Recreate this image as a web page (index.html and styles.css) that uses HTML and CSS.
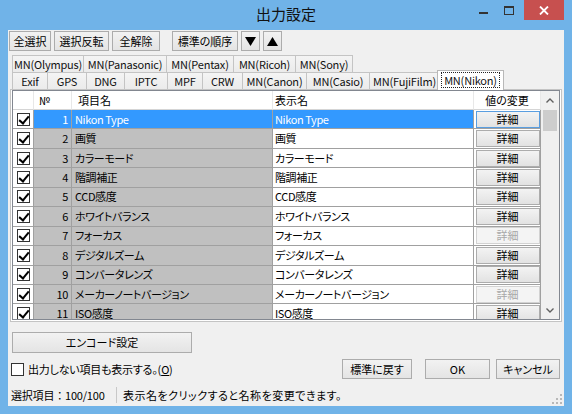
FILE: index.html
```html
<!DOCTYPE html>
<html lang="ja">
<head>
<meta charset="utf-8">
<title>出力設定</title>
<link rel="stylesheet" href="styles.css">
</head>
<body>
<div class="window">
  <div class="titlebar">
    <div class="tb-left"></div>
    <div class="title">出力設定</div>
    <div class="caption">
      <div class="cbtn cmin"><svg width="9" height="3" viewBox="0 0 9 3"><rect x="0" y="0" width="9" height="2" fill="#333"/></svg></div>
      <div class="cbtn cmax"><svg width="10" height="9" viewBox="0 0 10 9"><rect x="0.5" y="0.5" width="9" height="8" fill="none" stroke="#333"/><rect x="0" y="0" width="10" height="2" fill="#333"/></svg></div>
      <div class="cbtn cclose"><svg width="10" height="9" viewBox="0 0 10 9"><path d="M1 0.5 L9 8.5 M9 0.5 L1 8.5" stroke="#fff" stroke-width="1.8"/></svg></div>
    </div>
  </div>
  <div class="client">
    <div class="toolbar">
      <button class="btn b-all">全選択</button>
      <button class="btn b-inv">選択反転</button>
      <button class="btn b-clr">全解除</button>
      <button class="btn b-std">標準の順序</button>
      <button class="btn b-arr"><svg width="11" height="9" viewBox="0 0 11 9"><polygon points="0,0 11,0 5.5,9" fill="#000"/></svg></button>
      <button class="btn b-arr"><svg width="11" height="9" viewBox="0 0 11 9"><polygon points="0,9 11,9 5.5,0" fill="#000"/></svg></button>
    </div>
    <div class="tabs">
      <div class="tabrow r1">
        <div class="tab">MN(Olympus)</div>
        <div class="tab">MN(Panasonic)</div>
        <div class="tab">MN(Pentax)</div>
        <div class="tab">MN(Ricoh)</div>
        <div class="tab">MN(Sony)</div>
      </div>
      <div class="tabrow r2">
        <div class="tab">Exif</div>
        <div class="tab">GPS</div>
        <div class="tab">DNG</div>
        <div class="tab">IPTC</div>
        <div class="tab">MPF</div>
        <div class="tab">CRW</div>
        <div class="tab">MN(Canon)</div>
        <div class="tab">MN(Casio)</div>
        <div class="tab">MN(FujiFilm)</div>
        <div class="tab active"><span class="focus">MN(Nikon)</span></div>
      </div>
    </div>
    <div class="panel">
      <div class="list">
        <div class="grid">
          <div class="row head">
            <div class="c-chk"></div>
            <div class="c-no">№</div>
            <div class="c-name">項目名</div>
            <div class="c-disp">表示名</div>
            <div class="c-btn">値の変更</div>
          </div>
          <div class="row sel">
            <div class="c-chk"><span class="cb"></span></div>
            <div class="c-no">1</div>
            <div class="c-name">Nikon Type</div>
            <div class="c-disp">Nikon Type</div>
            <div class="c-btn"><span class="dbtn">詳細</span></div>
          </div>
          <div class="row">
            <div class="c-chk"><span class="cb"></span></div>
            <div class="c-no">2</div>
            <div class="c-name">画質</div>
            <div class="c-disp">画質</div>
            <div class="c-btn"><span class="dbtn">詳細</span></div>
          </div>
          <div class="row">
            <div class="c-chk"><span class="cb"></span></div>
            <div class="c-no">3</div>
            <div class="c-name">カラーモード</div>
            <div class="c-disp">カラーモード</div>
            <div class="c-btn"><span class="dbtn">詳細</span></div>
          </div>
          <div class="row">
            <div class="c-chk"><span class="cb"></span></div>
            <div class="c-no">4</div>
            <div class="c-name">階調補正</div>
            <div class="c-disp">階調補正</div>
            <div class="c-btn"><span class="dbtn">詳細</span></div>
          </div>
          <div class="row">
            <div class="c-chk"><span class="cb"></span></div>
            <div class="c-no">5</div>
            <div class="c-name">CCD感度</div>
            <div class="c-disp">CCD感度</div>
            <div class="c-btn"><span class="dbtn">詳細</span></div>
          </div>
          <div class="row">
            <div class="c-chk"><span class="cb"></span></div>
            <div class="c-no">6</div>
            <div class="c-name">ホワイトバランス</div>
            <div class="c-disp">ホワイトバランス</div>
            <div class="c-btn"><span class="dbtn">詳細</span></div>
          </div>
          <div class="row">
            <div class="c-chk"><span class="cb"></span></div>
            <div class="c-no">7</div>
            <div class="c-name">フォーカス</div>
            <div class="c-disp">フォーカス</div>
            <div class="c-btn"><span class="dbtn off">詳細</span></div>
          </div>
          <div class="row">
            <div class="c-chk"><span class="cb"></span></div>
            <div class="c-no">8</div>
            <div class="c-name">デジタルズーム</div>
            <div class="c-disp">デジタルズーム</div>
            <div class="c-btn"><span class="dbtn">詳細</span></div>
          </div>
          <div class="row">
            <div class="c-chk"><span class="cb"></span></div>
            <div class="c-no">9</div>
            <div class="c-name">コンバータレンズ</div>
            <div class="c-disp">コンバータレンズ</div>
            <div class="c-btn"><span class="dbtn">詳細</span></div>
          </div>
          <div class="row">
            <div class="c-chk"><span class="cb"></span></div>
            <div class="c-no">10</div>
            <div class="c-name">メーカーノートバージョン</div>
            <div class="c-disp">メーカーノートバージョン</div>
            <div class="c-btn"><span class="dbtn off">詳細</span></div>
          </div>
          <div class="row">
            <div class="c-chk"><span class="cb"></span></div>
            <div class="c-no">11</div>
            <div class="c-name">ISO感度</div>
            <div class="c-disp">ISO感度</div>
            <div class="c-btn"><span class="dbtn">詳細</span></div>
          </div>
        </div>
        <div class="vscroll">
          <div class="sb-arrow"><svg width="8" height="5" viewBox="0 0 8 5"><polyline points="0.5,4.5 4,1 7.5,4.5" fill="none" stroke="#606060" stroke-width="1.4"/></svg></div>
          <div class="sb-thumb"></div>
          <div class="sb-track"></div>
          <div class="sb-arrow"><svg width="8" height="5" viewBox="0 0 8 5"><polyline points="0.5,0.5 4,4 7.5,0.5" fill="none" stroke="#606060" stroke-width="1.4"/></svg></div>
        </div>
      </div>
    </div>
    <div class="lower">
      <button class="btn b-enc">エンコード設定</button>
      <div class="bottomrow">
        <label class="showall"><span class="cb empty"></span><span class="lbl">出力しない項目も表示する。(<u>O</u>)</span></label>
        <div class="actions">
          <button class="btn b-reset">標準に戻す</button>
          <button class="btn b-ok">OK</button>
          <button class="btn b-cancel">キャンセル</button>
        </div>
      </div>
    </div>
    <div class="statusbar">
      <div class="sp1">選択項目：100/100</div>
      <div class="sep"></div>
      <div class="sp2">表示名をクリックすると名称を変更できます。</div>
      <svg class="grip" width="10" height="10" viewBox="0 0 10 10">
        <rect x="8" y="0" width="2" height="2" fill="#b8b8b8"/>
        <rect x="4" y="4" width="2" height="2" fill="#b8b8b8"/>
        <rect x="8" y="4" width="2" height="2" fill="#b8b8b8"/>
        <rect x="0" y="8" width="2" height="2" fill="#b8b8b8"/>
        <rect x="4" y="8" width="2" height="2" fill="#b8b8b8"/>
        <rect x="8" y="8" width="2" height="2" fill="#b8b8b8"/>
      </svg>
    </div>
  </div>
</div>
</body>
</html>
```
FILE: styles.css
```css
* { box-sizing: border-box; margin: 0; padding: 0; }
html, body { width: 572px; height: 414px; overflow: hidden; }
body {
  background: #70b3e8;
  font-family: "Noto Sans CJK JP", "Noto Sans", sans-serif;
  font-size: 11px;
  font-feature-settings: "palt";
  color: #000;
}
.window { width: 572px; height: 414px; display: flex; flex-direction: column; }

/* title bar */
.titlebar {
  height: 30px;
  display: grid;
  grid-template-columns: 1fr auto 1fr;
  padding-right: 8px;
}
.title { font-size: 15px; line-height: 28px; color: #111; padding-left: 8px; font-feature-settings: normal; }
.caption { display: flex; justify-content: flex-end; align-items: flex-start; }
.cbtn { height: 20px; display: flex; align-items: center; justify-content: center; }
.cmin { width: 22px; padding-top: 6px; }
.cmax { width: 30px; }
.cclose { width: 40px; background: #c7504f; }

/* client */
.client {
  flex: 1;
  margin: 0 8px 8px 8px;
  background: #f0f0f0;
  display: flex;
  flex-direction: column;
}
.btn {
  height: 20px;
  border: 1px solid #acacac;
  background: linear-gradient(#f2f2f2, #e4e4e4);
  font-family: inherit;
  font-size: 11px;
  font-feature-settings: "palt";
  line-height: 17px;
  color: #000;
  padding: 0;
  display: flex;
  align-items: center;
  justify-content: center;
}
.toolbar { display: flex; gap: 3px; padding: 1px 0 0 1px; height: 21px; }
.b-all { width: 42px; }
.b-inv { width: 55px; }
.b-clr { width: 48px; margin-right: 9px; }
.b-std { width: 66px; }
.b-arr { width: 19px; }

/* tabs */
.tabs { margin-top: 4px; height: 34px; padding-left: 4px; display: flex; flex-direction: column; }
.tabrow { display: flex; height: 17px; align-items: flex-end; }
.tab {
  height: 17px;
  border: 1px solid #c4c4c4;
  border-bottom: none;
  margin-left: -1px;
  background: linear-gradient(#f4f4f4, #ebebeb);
  display: flex;
  align-items: center;
  justify-content: center;
  font-size: 11px;
  line-height: 15px;
  white-space: nowrap;
  letter-spacing: -0.2px;
  color: #111;
}
.tabrow .tab:first-child { margin-left: 0; }
.r1 .tab:nth-child(1) { width: 72px; }
.r1 .tab:nth-child(2) { width: 84px; }
.r1 .tab:nth-child(3) { width: 68px; }
.r1 .tab:nth-child(4) { width: 63px; }
.r1 .tab:nth-child(5) { width: 58px; }
.r2 .tab:nth-child(1) { width: 36px; }
.r2 .tab:nth-child(2) { width: 40px; }
.r2 .tab:nth-child(3) { width: 39px; }
.r2 .tab:nth-child(4) { width: 44px; }
.r2 .tab:nth-child(5) { width: 36px; }
.r2 .tab:nth-child(6) { width: 41px; }
.r2 .tab:nth-child(7) { width: 65px; }
.r2 .tab:nth-child(8) { width: 64px; }
.r2 .tab:nth-child(9) { width: 71px; }
.tab.active {
  width: 67px;
  height: 20px;
  margin: 0 -2px -1px -3px;
  background: #fff;
  position: relative;
  z-index: 1;
  border-color: #b8b8b8;
  padding-bottom: 2px;
}
.focus { outline: 1px dotted #222; outline-offset: 0; padding: 0 2px; line-height: 14px; }

/* panel + list */
.panel {
  height: 233px;
  margin: 0 2px;
  border: 1px solid #c4c4c4;
  background: #fff;
  padding: 0 1px 1px 1px;
}
.list {
  height: 230px;
  border: 1px solid #828790;
  background: #fff;
  display: flex;
}
.grid { width: 528px; overflow: hidden; }
.row {
  display: grid;
  grid-template-columns: 21px 38px 201px 201px 67px;
  height: 19.45px;
}
.row > div {
  border-right: 1px solid #a0a0a0;
  border-bottom: 1px solid #a0a0a0;
  display: flex;
  align-items: center;
  overflow: hidden;
  white-space: nowrap;
  line-height: 15px;
  letter-spacing: -0.4px;
}
.row.head { height: 19px; }
.row.head > div { border-right: 1px solid #e8e8e8; border-bottom: 1px solid #d5d5d5; background: #fff; letter-spacing: 0; }
.head .c-no { justify-content: flex-start; padding-left: 5px; }
.head .c-name { padding-left: 6px; }
.head .c-btn { justify-content: center; }
.c-chk { justify-content: center; background: #fff; }
.c-no { justify-content: flex-end; padding-right: 3px; background: #c0c0c0; }
.c-name { padding-left: 3px; background: #c0c0c0; }
.c-disp { padding-left: 2px; background: #fff; }
.c-btn { justify-content: center; background: #fff; }
.row.sel .c-no, .row.sel .c-name, .row.sel .c-disp { background: #3399ff; color: #fff; }

.cb {
  width: 13px; height: 13px;
  border: 1px solid #333;
  background: #fff;
  display: inline-block;
  position: relative;
}
.cb::after {
  content: "";
  position: absolute;
  left: 3px; top: 0px;
  width: 4px; height: 8px;
  border-right: 2px solid #000;
  border-bottom: 2px solid #000;
  transform: rotate(40deg);
}
.cb.empty::after { display: none; }

.dbtn {
  width: 64px; height: 17px;
  margin-left: 1px;
  border: 1px solid #acacac;
  background: linear-gradient(#f3f3f3, #e2e2e2);
  display: flex; align-items: center; justify-content: center;
  line-height: 15px;
  letter-spacing: 0;
}
.sel .dbtn { border-color: #5a9ee0; }
.dbtn.off { color: #a8a8a8; border-color: #d2d2d2; background: #f4f4f4; }

.vscroll { width: 18px; background: #f0f0f0; display: flex; flex-direction: column; }
.sb-arrow { height: 18px; display: flex; align-items: center; justify-content: center; }
.sb-thumb { height: 21px; margin: 1px 2px 0 2px; background: #cdcdcd; }
.sb-track { flex: 1; }

/* lower */
.lower { padding: 0 4px; }
.b-enc { width: 180px; height: 21px; margin-top: 10px; }
.bottomrow { display: flex; align-items: center; justify-content: space-between; height: 30px; padding-top: 2px; }
.showall { display: flex; align-items: center; gap: 4px; margin-left: -1px; }
.showall .cb { border-color: #333; }
.lbl { letter-spacing: -0.2px; }
.actions { display: flex; align-items: center; }
.b-reset { width: 70px; }
.b-ok { width: 65px; margin-left: 13px; }
.b-cancel { width: 64px; margin-left: 6px; }

/* status */
.statusbar { height: 23px; display: flex; align-items: center; padding-left: 3px; padding-right: 2px; }
.sp1 { width: 105px; white-space: nowrap; font-feature-settings: normal; letter-spacing: -0.2px; }
.sep { width: 1px; height: 16px; background: #c8c8c8; margin-right: 6px; }
.sp2 { flex: 1; white-space: nowrap; letter-spacing: 0.5px; }
.grip { align-self: flex-end; margin-bottom: 2px; }
```
